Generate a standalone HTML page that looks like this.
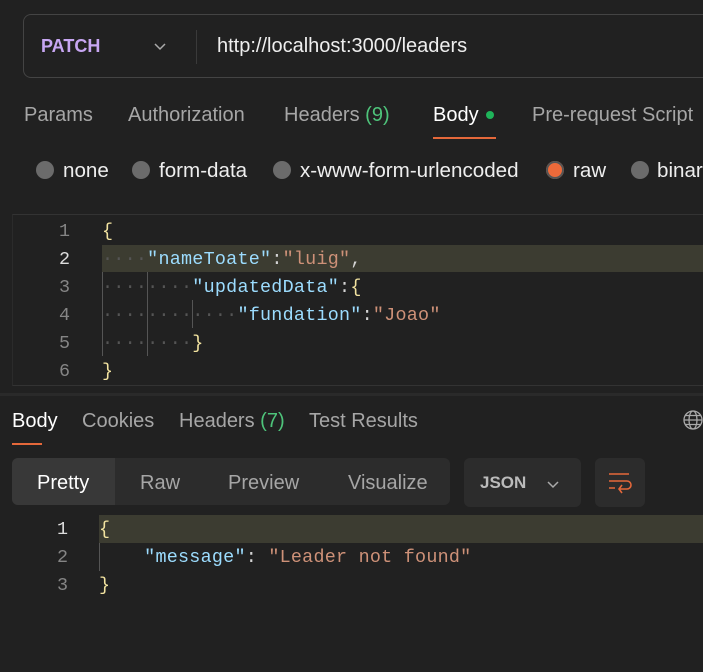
<!DOCTYPE html>
<html><head><meta charset="utf-8"><style>
body{margin:0;width:703px;height:672px;background:#212121;overflow:hidden;position:relative;font-family:"Liberation Sans",sans-serif;color:#a6a6a6}
.a{position:absolute;white-space:pre}
.t{font-size:20px;line-height:24px}
.rt{font-size:20.6px}
.m{font-family:"Liberation Mono",monospace;font-size:18.4px;line-height:28px;letter-spacing:0.25px}
.k{color:#9cdcfe}.s{color:#ce9178}.p{color:#d4d4d4}.b{color:#f2e3a0}
.ln{color:#858585;width:30px;text-align:right;letter-spacing:0}
.r{width:18px;height:18px;border-radius:50%;background:#6b6b6b}
.ws{color:#555}
</style></head><body>
<div class="a" style="left:23px;top:14px;width:700px;height:62px;border:1px solid #444;border-radius:8px"></div>
<div class="a t" style="left:41px;top:34px;color:#c7a6f2;font-weight:bold;font-size:18px">PATCH</div>
<svg class="a" style="left:153px;top:41px" width="14" height="10"><path d="M2 3l5 5 5-5" stroke="#aaa" stroke-width="1.5" fill="none"/></svg>
<div class="a" style="left:196px;top:30px;width:1px;height:34px;background:#3a3a3a"></div>
<div class="a t" style="left:217px;top:34px;color:#eee">http://localhost:3000/leaders</div>

<div class="a t" style="left:24px;top:103px">Params</div>
<div class="a t" style="left:128px;top:103px">Authorization</div>
<div class="a t" style="left:284px;top:103px">Headers <span style="color:#4ec37a">(9)</span></div>
<div class="a t" style="left:433px;top:103px;color:#fff">Body</div>
<div class="a" style="left:486px;top:111px;width:8px;height:8px;border-radius:50%;background:#1fb45a"></div>
<div class="a" style="left:433px;top:137px;width:63px;height:2px;background:#e5683a"></div>
<div class="a t" style="left:532px;top:103px">Pre-request Script</div>

<div class="a r" style="left:36px;top:161px"></div><div class="a t rt" style="left:63px;top:159px;color:#eee">none</div>
<div class="a r" style="left:132px;top:161px"></div><div class="a t rt" style="left:159px;top:159px;color:#eee">form-data</div>
<div class="a r" style="left:273px;top:161px"></div><div class="a t rt" style="left:300px;top:159px;color:#eee">x-www-form-urlencoded</div>
<div class="a r" style="left:546px;top:161px;background:#ee6a3a;box-shadow:0 0 0 2px #555 inset"></div><div class="a t rt" style="left:573px;top:159px;color:#eee">raw</div>
<div class="a r" style="left:631px;top:161px"></div><div class="a t rt" style="left:657px;top:159px;color:#eee">binar</div>

<div class="a" style="left:12px;top:214px;width:700px;height:170px;border-top:1px solid #333;border-left:1px solid #2b2b2b;border-bottom:1px solid #333"></div>
<div class="a" style="left:102px;top:245px;width:610px;height:27px;background:#3c3c31"></div>
<div class="a" style="left:102px;top:272px;width:1px;height:84px;background:#555"></div>
<div class="a" style="left:147px;top:272px;width:1px;height:84px;background:#555"></div>
<div class="a" style="left:192px;top:300px;width:1px;height:28px;background:#555"></div>
<div class="a m ln" style="left:40px;top:218px">1</div>
<div class="a m ln" style="left:40px;top:246px;color:#ddd">2</div>
<div class="a m ln" style="left:40px;top:274px">3</div>
<div class="a m ln" style="left:40px;top:302px">4</div>
<div class="a m ln" style="left:40px;top:330px">5</div>
<div class="a m ln" style="left:40px;top:358px">6</div>
<div class="a m" style="left:102px;top:218px"><span class="b">{</span></div>
<div class="a m" style="left:102px;top:246px"><span class="ws">····</span><span class="k">"nameToate"</span><span class="p">:</span><span class="s">"luig"</span><span class="p">,</span></div>
<div class="a m" style="left:102px;top:274px"><span class="ws">········</span><span class="k">"updatedData"</span><span class="p">:</span><span class="b">{</span></div>
<div class="a m" style="left:102px;top:302px"><span class="ws">············</span><span class="k">"fundation"</span><span class="p">:</span><span class="s">"Joao"</span></div>
<div class="a m" style="left:102px;top:330px"><span class="ws">········</span><span class="b">}</span></div>
<div class="a m" style="left:102px;top:358px"><span class="b">}</span></div>

<div class="a" style="left:0;top:393px;width:703px;height:3px;background:#2a2a2a"></div>
<div class="a t" style="left:12px;top:409px;color:#fff">Body</div>
<div class="a" style="left:12px;top:443px;width:30px;height:2px;background:#e5683a"></div>
<div class="a t" style="left:82px;top:409px">Cookies</div>
<div class="a t" style="left:179px;top:409px">Headers <span style="color:#4ec37a">(7)</span></div>
<div class="a t" style="left:309px;top:409px">Test Results</div>
<svg class="a" style="left:682px;top:409px" width="22" height="22"><g stroke="#aaa" stroke-width="1.3" fill="none"><circle cx="11" cy="11" r="9"/><ellipse cx="11" cy="11" rx="4" ry="9"/><path d="M2 11h18M3.5 6.5h15M3.5 15.5h15"/></g></svg>

<div class="a" style="left:12px;top:458px;width:438px;height:47px;background:#2c2c2c;border-radius:6px"></div>
<div class="a" style="left:12px;top:458px;width:103px;height:47px;background:#383838;border-radius:6px 0 0 6px"></div>
<div class="a t" style="left:37px;top:471px;color:#fff">Pretty</div>
<div class="a t" style="left:140px;top:471px">Raw</div>
<div class="a t" style="left:228px;top:471px">Preview</div>
<div class="a t" style="left:348px;top:471px">Visualize</div>
<div class="a" style="left:464px;top:458px;width:117px;height:49px;background:#2c2c2c;border-radius:6px"></div>
<div class="a" style="left:480px;top:473px;font-size:17px;font-weight:bold;color:#bbb">JSON</div>
<svg class="a" style="left:546px;top:479px" width="14" height="10"><path d="M2 3l5 5 5-5" stroke="#aaa" stroke-width="1.5" fill="none"/></svg>
<div class="a" style="left:595px;top:458px;width:50px;height:49px;background:#2c2c2c;border-radius:6px"></div>
<svg class="a" style="left:606px;top:471px" width="28" height="24"><g stroke="#e5683a" stroke-width="1.6" fill="none"><path d="M3 3h20M3 10h18a4 4 0 0 1 0 8h-7M3 17h6M16 14l-3 4 3 4"/></g></svg>

<div class="a" style="left:99px;top:515px;width:610px;height:28px;background:#3c3c31"></div>
<div class="a" style="left:99px;top:543px;width:1px;height:28px;background:#555"></div>
<div class="a m ln" style="left:38px;top:516px;color:#ddd">1</div>
<div class="a m ln" style="left:38px;top:544px">2</div>
<div class="a m ln" style="left:38px;top:572px">3</div>
<div class="a m" style="left:99px;top:516px"><span class="b">{</span></div>
<div class="a m" style="left:99px;top:544px"><span>    </span><span class="k">"message"</span><span class="p">: </span><span class="s">"Leader not found"</span></div>
<div class="a m" style="left:99px;top:572px"><span class="b">}</span></div>
</body></html>
